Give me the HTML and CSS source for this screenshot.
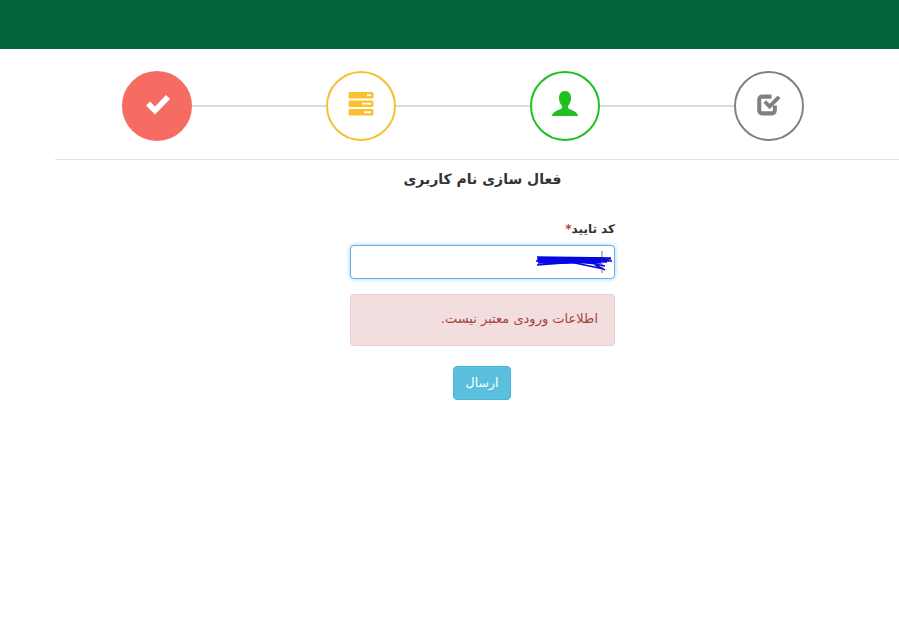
FILE: index.html
```html
<!DOCTYPE html>
<html lang="fa" dir="rtl">
<head>
<meta charset="utf-8">
<title>فعال سازی نام کاربری</title>
<link rel="stylesheet" href="styles.css">
</head>
<body>
<header class="topbar"></header>
<nav class="steps" dir="ltr">
  <div class="step step-done">
    <svg class="icon icon-done" viewBox="0 0 28 24" width="28" height="24"><path d="M2 13.500l4-4 5 5L22 3l4 4-15 15.500z" fill="#fff"/></svg>
  </div>
  <div class="link"></div>
  <div class="step step-server">
    <svg class="icon" viewBox="0 0 26 24" width="26" height="24">
      <rect x="0.500" y="0" width="25" height="6.500" rx="1.500" fill="#fbc02d"/>
      <rect x="0.500" y="8.500" width="25" height="6.500" rx="1.500" fill="#fbc02d"/>
      <rect x="0.500" y="17" width="25" height="6.500" rx="1.500" fill="#fbc02d"/>
      <rect x="19" y="2.300" width="4" height="1.800" fill="#fff"/>
      <rect x="14" y="10.800" width="9" height="1.800" fill="#fff"/>
      <rect x="16" y="19.300" width="7" height="1.800" fill="#fff"/>
    </svg>
  </div>
  <div class="link"></div>
  <div class="step step-user">
    <svg class="icon" viewBox="0 0 26 26" width="26" height="26"><path d="M13 0c4 0 6 3 6 7 0 3-1 6-3 8v2c2 2 9 3 10 7.500V25H0v-.500C1 20 8 19 10 17v-2C8 13 7 10 7 7c0-4 2-7 6-7z" fill="#1fc01f"/></svg>
  </div>
  <div class="link"></div>
  <div class="step step-check">
    <svg class="icon icon-check" viewBox="2 3 21.500 19" width="24" height="22">
      <path d="M18 13v4.500a2.500 2.500 0 0 1-2.500 2.500H6.500A2.500 2.500 0 0 1 4 17.500v-10A2.500 2.500 0 0 1 6.500 5H15" fill="none" stroke="#808080" stroke-width="3.600"/>
      <path d="M7.800 10.500l2.300-2.300 3.200 3.200L20.500 4l2.500 2.500-9.700 9.800z" fill="#808080"/>
    </svg>
  </div>
</nav>
<main class="content">
  <h1 class="title">فعال سازی نام کاربری</h1>
  <form class="form">
    <label class="label" for="code">کد تایید<span class="req">*</span></label>
    <div class="input-box" id="code">
      <svg class="scribble" viewBox="0 0 78 24" width="78" height="24">
        <path d="M2 7l74 1M2 9l70 3M1 11l75-2M3 13l60-2 14 0M2 15l40-3 20 2M35 12l34 7M45 11l25 5M55 12l15 8M2 10l72 0M6 8l60 5" fill="none" stroke="#0606e0" stroke-width="1.500"/>
        <path d="M3 7h62l10 2-20 4-30 1-22-1z" fill="#0606e0"/>
        <path d="M67 1v22" fill="none" stroke="#2a2a90" stroke-width="0.700"/>
      </svg>
    </div>
    <div class="alert">اطلاعات ورودی معتبر نیست.</div>
    <div class="actions"><button type="button" class="btn">ارسال</button></div>
  </form>
</main>
</body>
</html>
```

FILE: styles.css
```css
html, body {
  margin: 0;
  padding: 0;
  height: 631px;
  overflow: hidden;
  background: #fff;
  font-family: "DejaVu Sans", "Liberation Sans", sans-serif;
  color: #333;
}
.topbar {
  height: 49px;
  background: #05653a;
}
.steps {
  display: flex;
  align-items: center;
  margin: 22px 95px 0 122px;
}
.step {
  width: 70px;
  height: 70px;
  box-sizing: border-box;
  flex: none;
  border-radius: 50%;
  border: 2px solid;
  display: flex;
  align-items: center;
  justify-content: center;
}
.icon {
  display: block;
  margin-bottom: 5px;
}
.icon-done {
  margin-left: 2px;
  margin-bottom: 4px;
}
.icon-check {
  margin-bottom: 3px;
}
.step-done { background: #f66c62; border-color: #f66c62; }
.step-server { border-color: #f7c033; }
.step-user { border-color: #1fc01f; }
.step-check { border-color: #808080; }
.link {
  flex: 1;
  height: 2px;
  background: #dcdcdc;
}
.content {
  margin: 18px -11px 0 55px;
  border-top: 1px solid #e2e2e2;
}
.title {
  margin: 8px 0 0;
  text-align: center;
  font-size: 14px;
  line-height: 22px;
  font-weight: 700;
  color: #333;
}
.form {
  width: 265px;
  margin: 30px auto 0;
}
.label {
  display: block;
  font-size: 12px;
  line-height: 18px;
  font-weight: 700;
  margin-bottom: 7px;
}
.req { color: #a94442; }
.input-box {
  height: 34px;
  box-sizing: border-box;
  border: 1px solid #66afe9;
  border-radius: 4px;
  box-shadow: 0 0 4px rgba(102, 175, 233, 0.6);
  background: #fff;
  display: flex;
  align-items: center;
  padding-right: 1px;
}
.scribble { display: block; }
.alert {
  margin-top: 15px;
  height: 52px;
  box-sizing: border-box;
  padding: 0 16px;
  background: #f2dede;
  border: 1px solid #ebccd1;
  border-radius: 4px;
  color: #a94442;
  font-size: 13px;
  line-height: 48px;
}
.actions {
  margin-top: 20px;
  padding-right: 1px;
  text-align: center;
}
.btn {
  width: 58px;
  height: 34px;
  padding: 0 0 2px;
  font: inherit;
  font-size: 12.500px;
  color: #fff;
  background: #5bc0de;
  border: 1px solid #46b8da;
  border-radius: 4px;
}
```
